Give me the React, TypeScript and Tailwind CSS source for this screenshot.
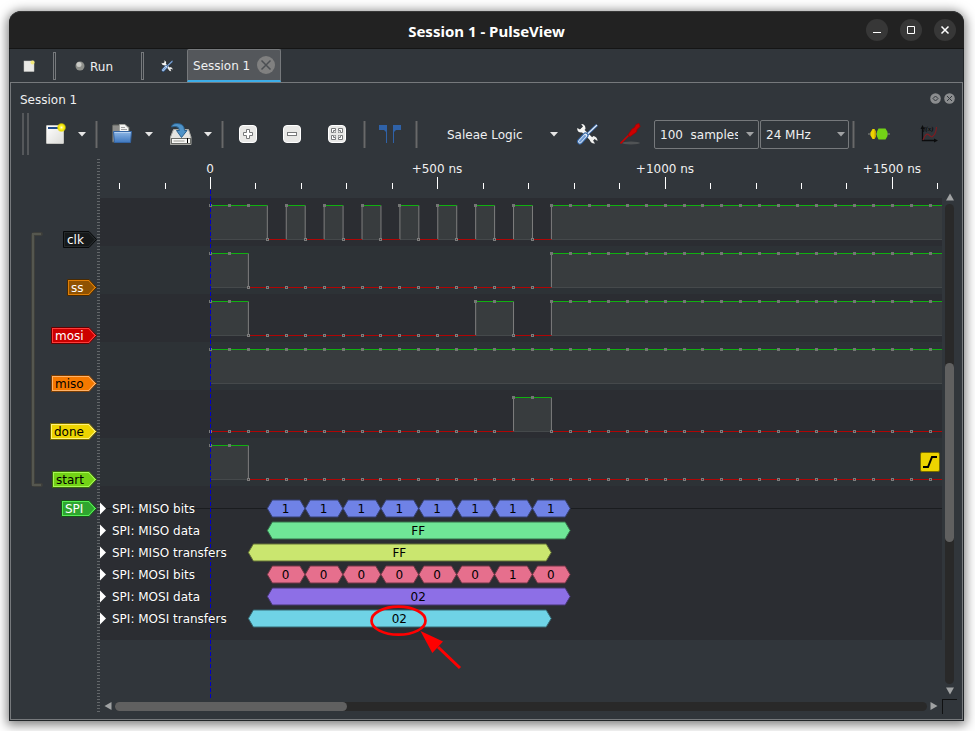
import React from "react";

const T0 = 110.5;
const SAMPLE = 18.94;
const TICK = 45.46;
const SAMPLE_COUNT = 110;
const TOP = 40;
const ROW = 48;

type Signal = { name: string; high: [number, number][] };

const END = SAMPLE_COUNT;

const signals: Signal[] = [
  {
    name: "clk",
    high: [[0, 3], [4, 5], [6, 7], [8, 9], [10, 11], [12, 13], [14, 15], [16, 17], [18, END]],
  },
  { name: "ss", high: [[0, 2], [18, END]] },
  { name: "mosi", high: [[0, 2], [14, 16], [18, END]] },
  { name: "miso", high: [[0, END]] },
  { name: "done", high: [[16, 18]] },
  { name: "start", high: [[0, 2]] },
];

type Flag = { name: string; x: number; y: number; fill: string; light: string; edge: string; text: string };

const flags: Flag[] = [
  { name: "clk", x: 52, y: 81, fill: "#16191a", light: "#24292b", edge: "#07090a", text: "#ffffff" },
  { name: "ss", x: 56, y: 129, fill: "#8f5202", light: "#e07f06", edge: "#4a2a01", text: "#ffffff" },
  { name: "mosi", x: 40, y: 177, fill: "#cc0000", light: "#ff3b3b", edge: "#660000", text: "#ffffff" },
  { name: "miso", x: 40, y: 225, fill: "#f57900", light: "#ffb268", edge: "#7a3c00", text: "#000000" },
  { name: "done", x: 39, y: 273, fill: "#edd400", light: "#fff27a", edge: "#766a00", text: "#000000" },
  { name: "start", x: 41, y: 321, fill: "#73d216", light: "#a6fa55", edge: "#39690b", text: "#000000" },
  { name: "SPI", x: 50, y: 350, fill: "#2fa52f", light: "#55f055", edge: "#175217", text: "#ffffff" },
];

type Annotation = { from: number; to: number; text: string };
type DecoderRow = { title: string; fill: string; edge: string; items: Annotation[] };

const bits = (s: string): Annotation[] =>
  s.split("").map((text, i) => ({ from: 3 + i * 2, to: 5 + i * 2, text }));

const decoderRows: DecoderRow[] = [
  { title: "SPI: MISO bits", fill: "#6f82e6", edge: "#374173", items: bits("11111111") },
  { title: "SPI: MISO data", fill: "#6fe697", edge: "#37734b", items: [{ from: 3, to: 19, text: "FF" }] },
  { title: "SPI: MISO transfers", fill: "#cae66f", edge: "#657337", items: [{ from: 2, to: 18, text: "FF" }] },
  { title: "SPI: MOSI bits", fill: "#e66f8d", edge: "#733746", items: bits("00000010") },
  { title: "SPI: MOSI data", fill: "#8d6fe6", edge: "#463773", items: [{ from: 3, to: 19, text: "02" }] },
  { title: "SPI: MOSI transfers", fill: "#6fd3e6", edge: "#376973", items: [{ from: 2, to: 18, text: "02" }] },
];

const sx = (n: number) => T0 + n * SAMPLE;

function Trace({ signal, index }: { signal: Signal; index: number }) {
  const top = TOP + index * ROW;
  const hi = top + 7.5;
  const lo = top + 41.5;
  const isHigh = (n: number) => signal.high.some(([a, b]) => n >= a && n < b);
  const lows: [number, number][] = [];
  let at = 0;
  signal.high.forEach(([a, b]) => {
    if (a > at) lows.push([at, a]);
    at = b;
  });
  if (at < END) lows.push([at, END]);
  return (
    <g>
      <rect x="0" y={top} width="100%" height={ROW} fill={index % 2 ? "#2d3236" : "#2b2d32"} />
      {signal.high.map(([a, b]) => (
        <g key={a}>
          <rect x={sx(a)} y={hi} width={sx(b) - sx(a)} height="34" fill="#383c3e" />
          <path d={`M${sx(a)} ${lo}H${sx(b)}`} stroke="#45494b" />
          {a > 0 && <path d={`M${sx(a)} ${hi}V${lo}`} stroke="#7e7e7e" />}
          <path d={`M${sx(b)} ${hi}V${lo}`} stroke="#7e7e7e" />
          <path d={`M${sx(a)} ${hi}H${sx(b)}`} stroke="#10b010" />
        </g>
      ))}
      {lows.map(([a, b]) => (
        <path key={a} d={`M${sx(a)} ${lo}H${sx(b)}`} stroke="#b00505" />
      ))}
      {Array.from({ length: SAMPLE_COUNT }, (_, n) => {
        const x = Math.round(sx(n) - 0.5) - 1;
        return isHigh(n) ? (
          <rect key={n} x={x} y={hi - 1.5} width="3" height="3" fill="#747674" />
        ) : (
          <rect key={n} x={x + 0.5} y={lo - 1} width="2" height="2" fill="#40393a" stroke="#7d7d7d" />
        );
      })}
    </g>
  );
}

const ticks = Array.from({ length: 19 }, (_, i) => i - 2);

function TraceView() {
  const cursor = Math.floor(T0) + 0.5;
  return (
    <svg className="block h-[540px] w-full overflow-hidden text-xs" role="img" aria-label="Signal traces">
      {ticks.map((n) => {
        const x = Math.floor(T0 + n * TICK) + 0.5;
        const major = n % 5 === 0;
        return (
          <g key={n}>
            <path d={major ? `M${x} 19V31` : `M${x} 25V31`} stroke="#ffffff" />
            {major && (
              <text x={x - 0.5} y="15" textAnchor="middle" fill="#f0f0f0">
                {n === 0 ? "0" : `+${n * 100} ns`}
              </text>
            )}
          </g>
        );
      })}
      {signals.map((s, i) => (
        <Trace key={s.name} signal={s} index={i} />
      ))}
      <rect x="0" y="328" width="100%" height="154" fill="#2b2d32" />
      <path d="M0 350.5H3000" stroke="#1a1c1f" />
      <path d={`M${cursor} 32V540`} stroke="#0000c8" strokeDasharray="4 2" />
      {decoderRows.map((row, i) => {
        const y = 350.5 + i * 22;
        return (
          <g key={row.title}>
            <path d={`M0 ${y - 6}L6 ${y}L0 ${y + 6}Z`} fill="#ffffff" />
            <text x="12" y={y + 4} fill="#ffffff" stroke="#1f2124" strokeWidth="1" paintOrder="stroke">
              {row.title}
            </text>
            {row.items.map((a) => {
              const l = sx(a.from);
              const r = sx(a.to) - 0.2;
              return (
                <g key={a.from}>
                  <path
                    d={`M${l} ${y}L${l + 5} ${y - 8.5}H${r - 5}L${r} ${y}L${r - 5} ${y + 8.5}H${l + 5}Z`}
                    fill={row.fill}
                    stroke={row.edge}
                  />
                  <text x={(l + r) / 2 - 0.5} y={y + 4} textAnchor="middle" fill="#000000">
                    {a.text}
                  </text>
                </g>
              );
            })}
          </g>
        );
      })}
      <ellipse cx="298.5" cy="462.7" rx="27" ry="14" fill="none" stroke="#ff0000" strokeWidth="2.7" />
      <path d="M360 510L338 489" stroke="#ff0000" strokeWidth="3" />
      <path d="M320.5 473L343 483.5L332.3 495Z" fill="#ff0000" />
    </svg>
  );
}

function ChannelLabels() {
  return (
    <svg className="block h-[540px] w-[86px] shrink-0 text-xs" role="img" aria-label="Channels">
      <path d="M30 76H23.5Q22 76 22 77.5V326Q22 327 23.5 327H30" fill="none" stroke="#3e3f3b" strokeWidth="4" strokeLinecap="round" />
      <path d="M30 76H22V327H30" fill="none" stroke="#55574f" strokeWidth="2" />
      {flags.map(({ name, x, y, fill, light, edge, text }) => (
        <g key={name}>
          <path d={`M${x + 0.5} ${y - 7.5}H78L85.5 ${y + 0.5}L78 ${y + 8.5}H${x + 0.5}Z`} fill={light} stroke={edge} />
          <path d={`M${x + 2} ${y - 6}H77.5L83.5 ${y + 0.5}L77.5 ${y + 7}H${x + 2}Z`} fill={fill} />
          <text x={x + 4} y={y + 5} fill={text}>
            {name}
          </text>
        </g>
      ))}
    </svg>
  );
}

function DownArrow({ color = "#e6e6e6" }: { color?: string }) {
  return (
    <svg width="8" height="5" viewBox="0 0 8 5" aria-hidden="true">
      <path d="M0 0H8L4 4.5Z" fill={color} />
    </svg>
  );
}

function Separator({ className }: { className: string }) {
  return <div className={`h-[27px] w-[3px] shrink-0 border-x border-[#4b4d4f] bg-[#68696a] ${className}`} />;
}

function ToolButton({ label, className = "w-7", children }: { label: string; className?: string; children: React.ReactNode }) {
  return (
    <button type="button" aria-label={label} className={`flex h-7 shrink-0 items-center justify-center ${className}`}>
      {children}
    </button>
  );
}

function NewIcon() {
  return (
    <svg width="22" height="22" viewBox="0 0 22 22">
      <defs>
        <linearGradient id="paper" x1="0" y1="0" x2="1" y2="1">
          <stop offset="0" stopColor="#ffffff" />
          <stop offset="1" stopColor="#dcdcd8" />
        </linearGradient>
        <radialGradient id="glow">
          <stop offset="0" stopColor="#fffde0" />
          <stop offset="0.35" stopColor="#fff32a" />
          <stop offset="0.7" stopColor="#e8dc00" />
          <stop offset="1" stopColor="#e8dc00" stopOpacity="0" />
        </radialGradient>
      </defs>
      <rect x="1.5" y="2.5" width="17" height="18" rx="0.5" fill="url(#paper)" stroke="#c4c4c0" />
      <rect x="3" y="4" width="14" height="2" fill="#204a87" />
      <circle cx="16.5" cy="4.5" r="4.8" fill="url(#glow)" />
    </svg>
  );
}

function FolderIcon() {
  return (
    <svg width="22" height="22" viewBox="0 0 22 22">
      <defs>
        <linearGradient id="folder" x1="0" y1="0" x2="0" y2="1">
          <stop offset="0" stopColor="#8fb8e6" />
          <stop offset="1" stopColor="#3f78bf" />
        </linearGradient>
      </defs>
      <path d="M1.5 19V3Q1.5 2 2.5 2H8L9.5 4H18V19Z" fill="#8d8d8a" stroke="#62645f" />
      <path d="M8.5 12V1.500H14L17.5 5V12Z" fill="#f4f4f2" stroke="#a5a7a2" />
      <path d="M10 4.500H14M10 6.500H16" stroke="#a0a0a0" />
      <path d="M2.5 8.5H20.5L19.5 19.5H3.5Z" fill="url(#folder)" stroke="#3465a4" />
      <path d="M3.5 9.5H19.5" stroke="#b4d0f0" />
    </svg>
  );
}

function SaveIcon() {
  return (
    <svg width="24" height="24" viewBox="0 0 24 24">
      <path d="M4.5 7.5H19.5L22 15V22.5H1.5V15Z" fill="#e4e4e1" stroke="#a8a8a4" />
      <rect x="2.5" y="16.5" width="19" height="5" fill="#f8f8f6" stroke="#6b6d69" />
      <rect x="4.5" y="18" width="11" height="2" fill="#c8c8c4" />
      <path d="M18.5 16V21" stroke="#000000" />
      <path d="M2.5 5Q3 1.500 8 1.500Q15.500 1.500 15.500 8.500H18L12.5 15.500L7.500 8.500H10.5Q10 4.500 6.500 4.500Q4 4.500 2.500 5Z" fill="#4f93c8" stroke="#2a608d" />
    </svg>
  );
}

function ZoomIcon({ kind }: { kind: "in" | "out" | "fit" }) {
  return (
    <svg width="20" height="20" viewBox="0 0 20 20">
      <rect x="1.5" y="1.5" width="17" height="17" rx="3.5" fill="#e8e8e6" stroke="#ffffff" />
      {kind === "in" && (
        <path d="M8.5 5.5H11.5V8.5H14.5V11.5H11.5V14.5H8.5V11.5H5.5V8.5H8.5Z" fill="#ffffff" stroke="#77797a" />
      )}
      {kind === "out" && <rect x="5.5" y="8.5" width="9" height="3" fill="#ffffff" stroke="#77797a" />}
      {kind === "fit" && (
        <g fill="#ffffff" stroke="#77797a">
          <path d="M4.500 8.500V4.500H8.500V6.500H6.500V8.500Z" />
          <path d="M11.500 4.500H15.500V8.500H13.500V6.500H11.500Z" />
          <path d="M4.500 11.500V15.500H8.500V13.500H6.500V11.500Z" />
          <path d="M11.500 15.500H15.500V11.500H13.500V13.500H11.500Z" />
          <path d="M8.500 7.500V8.500H7.500M11.500 7.500V8.500H12.500M8.500 12.500V11.500H7.500M11.500 12.500V11.500H12.500" fill="none" />
        </g>
      )}
    </svg>
  );
}

function CursorsIcon() {
  return (
    <svg width="22" height="18" viewBox="0 0 22 18">
      <path d="M0 0H8V18H7V7L5 5H0Z" fill="#2f62a8" />
      <path d="M22 0H14V18H15V7L17 5H22Z" fill="#2f62a8" />
    </svg>
  );
}

function ToolsIcon({ size }: { size: number }) {
  return (
    <svg width={size} height={size} viewBox="0 0 22 22">
      <path d="M5 6L17 17.500" stroke="#f6f6f4" strokeWidth="3.600" />
      <path d="M1.200 5Q1 9.500 5.500 9.500L9.500 6Q9.500 1 5.200 1L7 3.500L4 6.500Z" fill="#f6f6f4" />
      <path d="M13.500 16.500L17.500 13Q21.500 14 21.500 18L18.500 16L17 17.500L19 20.500Q15 21 13.500 16.500Z" fill="#f0f0ee" />
      <path d="M21 2L11 11.500" stroke="#3465a4" strokeWidth="3" />
      <path d="M21 2L11 11.500" stroke="#e8eef8" strokeWidth="1.200" />
      <path d="M9.500 12.500L4 18.500" stroke="#3465a4" strokeWidth="6" strokeLinecap="round" />
      <path d="M9.500 12.500L4 18.500" stroke="#dbe7f6" strokeWidth="3.800" strokeLinecap="round" />
      <path d="M9 13L4 18.500" stroke="#6f9bd4" strokeWidth="2" strokeLinecap="round" />
    </svg>
  );
}

function ProbeIcon() {
  return (
    <svg width="22" height="22" viewBox="0 0 22 22">
      <ellipse cx="11" cy="20" rx="9" ry="1.500" fill="#505355" />
      <path d="M0.500 20.500L10 11" stroke="#cc0000" strokeWidth="1.600" />
      <path d="M8 12L12 6L14.500 4.500L16 1.500L19 0.500L20 3.500L17 6.500L16.500 9L10 13.500Z" fill="#cc0000" stroke="#a40000" strokeWidth="0.800" />
    </svg>
  );
}

function DecoderIcon() {
  return (
    <svg width="22" height="14" viewBox="0 0 22 14">
      <path d="M0 7H22" stroke="#888a85" />
      <path d="M4.500 2H6.500L8 5V9L6.500 12H4.500L2.500 8.500V5.500Z" fill="#edd400" />
      <path d="M6.500 2L8 5V9L6.500 12Z" fill="#c4a000" />
      <path d="M10.500 1.500H17.500L19.500 5V9L17.500 12.500H10.500L8.800 9V5Z" fill="#73d216" />
    </svg>
  );
}

function MathIcon() {
  return (
    <svg width="18" height="18" viewBox="0 0 18 18">
      <path d="M2.500 3V15.500H15" fill="none" stroke="#0b0c0d" strokeWidth="1.300" />
      <path d="M2.500 0L4.500 4H0.500ZM18 15.500L14 13.500V17.500Z" fill="#0b0c0d" />
      <path d="M3 15Q6 7 9 10T13 11Q16 9 16.500 2" fill="none" stroke="#7d1d22" strokeWidth="1.200" />
      <text x="3" y="6" fontSize="7" fontStyle="italic" fontWeight="bold" fill="#0b0c0d" fontFamily="Liberation Serif, serif">
        f(x)
      </text>
    </svg>
  );
}

function WindowButton({ label, children }: { label: string; children: React.ReactNode }) {
  return (
    <button type="button" aria-label={label} className="flex size-[22px] items-center justify-center rounded-full bg-[#373737]">
      <svg width="10" height="10" viewBox="0 0 10 10" fill="none" stroke="#ffffff">
        {children}
      </svg>
    </button>
  );
}

function TitleBar() {
  return (
    <header className="grid h-[38px] shrink-0 grid-cols-[1fr_auto_1fr] items-center rounded-t-xl border-t border-b border-t-[#383838] border-b-[#151515] bg-[#222222] px-2">
      <span />
      <h1 className="pt-px font-['Noto_Sans',sans-serif] text-[15px] font-bold text-white">Session 1 - PulseView</h1>
      <div className="flex justify-end gap-3">
        <WindowButton label="Minimize">
          <path d="M1 7.500H9" />
        </WindowButton>
        <WindowButton label="Maximize">
          <path d="M1.500 1.500H8.500V8.500H1.500Z" />
        </WindowButton>
        <WindowButton label="Close">
          <path d="M1.500 1.500L8.500 8.500M8.500 1.500L1.500 8.500" strokeWidth="1.500" />
        </WindowButton>
      </div>
    </header>
  );
}

function TabSeparator({ className }: { className: string }) {
  return <div className={`h-7 w-[3px] shrink-0 border border-[#76797c] ${className}`} />;
}

function TabRow() {
  return (
    <nav className="flex h-[33px] shrink-0 items-center">
      <ToolButton label="New session" className="ml-[5px] w-7">
        <svg width="12" height="12" viewBox="0 0 12 12">
          <rect x="1" y="1" width="10" height="10.500" fill="#e9e9e6" stroke="#c8c8c4" strokeWidth="0.500" />
          <circle cx="9.500" cy="2.500" r="2" fill="#f2e87a" />
        </svg>
      </ToolButton>
      <TabSeparator className="ml-[10px]" />
      <button type="button" className="ml-[19px] flex items-center gap-[5px]">
        <svg width="10" height="10" viewBox="0 0 10 10">
          <circle cx="5" cy="5" r="4.500" fill="#8d8f8a" />
          <circle cx="4" cy="3.500" r="2.500" fill="#c9cac5" />
        </svg>
        <span className="pt-[2px]">Run</span>
      </button>
      <TabSeparator className="ml-7" />
      <ToolButton label="Settings" className="ml-[9px] w-7">
        <ToolsIcon size={12} />
      </ToolButton>
      <div className="ml-[6px] flex h-[33px] items-center gap-[7px] rounded-t-xs border border-b-2 border-[#76797c] border-b-[#3daee9] bg-[#54575b] pr-[5px] pl-[5px]">
        <button type="button" className="pt-px">Session 1</button>
        <button type="button" aria-label="Close tab">
          <svg className="block" width="18" height="18" viewBox="0 0 18 18">
            <circle cx="9" cy="9" r="9" fill="#808080" />
            <path d="M4.500 4.500L13.500 13.500M13.500 4.500L4.500 13.500" stroke="#4c4f53" strokeWidth="1.500" />
          </svg>
        </button>
      </div>
    </nav>
  );
}

function DockButton({ label, d }: { label: string; d: string }) {
  return (
    <button type="button" aria-label={label}>
      <svg className="block" width="11" height="11" viewBox="0 0 11 11">
        <circle cx="5.500" cy="5.500" r="5.300" fill="#8b8d8f" />
        <path d={d} fill="none" stroke="#31363b" />
      </svg>
    </button>
  );
}

function MainToolbar() {
  return (
    <div role="toolbar" className="flex h-[42px] shrink-0 items-center pl-[11px]">
      <div className="h-full w-[7px] shrink-0 border-x-2 border-[#55585b]" />
      <ToolButton label="New" className="ml-[13px] w-[27px]"><NewIcon /></ToolButton>
      <ToolButton label="New options" className="w-[25px]"><DownArrow /></ToolButton>
      <Separator className="ml-px" />
      <ToolButton label="Open" className="ml-[10px] w-7"><FolderIcon /></ToolButton>
      <ToolButton label="Open options" className="w-[25px]"><DownArrow /></ToolButton>
      <ToolButton label="Save" className="ml-[6px] w-7"><SaveIcon /></ToolButton>
      <ToolButton label="Save options" className="w-[25px]"><DownArrow /></ToolButton>
      <Separator className="ml-px" />
      <ToolButton label="Zoom in" className="ml-[10px] w-7"><ZoomIcon kind="in" /></ToolButton>
      <ToolButton label="Zoom out" className="ml-4 w-7"><ZoomIcon kind="out" /></ToolButton>
      <ToolButton label="Zoom to fit" className="ml-[17px] w-7"><ZoomIcon kind="fit" /></ToolButton>
      <Separator className="ml-3" />
      <ToolButton label="Show cursors" className="ml-[10px] w-7"><CursorsIcon /></ToolButton>
      <Separator className="ml-[11px]" />
      <button type="button" className="ml-[29px] flex w-[111px] shrink-0 items-center justify-between whitespace-nowrap">
        <span className="pt-[2px]">Saleae Logic</span>
        <DownArrow />
      </button>
      <ToolButton label="Configure device" className="ml-[15px] w-7"><ToolsIcon size={22} /></ToolButton>
      <ToolButton label="Channels" className="ml-4 w-7"><ProbeIcon /></ToolButton>
      <div className="ml-[9px] flex h-[29px] w-[105px] shrink-0 items-center justify-between rounded-xs border border-[#76797c] pr-1 pl-[5px]">
        <input aria-label="Sample count" defaultValue="100  samples" className="w-[78px] bg-transparent pt-[2px] outline-none" />
        <DownArrow color="#a0a2a4" />
      </div>
      <div className="relative ml-px h-[29px] w-[89px] shrink-0">
        <select aria-label="Sample rate" defaultValue="24" className="h-full w-full appearance-none rounded-xs border border-[#76797c] bg-transparent pt-[2px] pl-[5px]">
          <option value="24">24 MHz</option>
          <option value="12">12 MHz</option>
        </select>
        <span className="pointer-events-none absolute inset-y-0 right-1 flex items-center"><DownArrow color="#a0a2a4" /></span>
      </div>
      <Separator className="ml-[3px]" />
      <ToolButton label="Add decoder" className="ml-[10px] w-7"><DecoderIcon /></ToolButton>
      <ToolButton label="Add math signal" className="ml-[22px] w-7"><MathIcon /></ToolButton>
    </div>
  );
}

function ScrollArrow({ d, label }: { d: string; label: string }) {
  return (
    <button type="button" aria-label={label} className="shrink-0">
      <svg className="block" width="8" height="8" viewBox="0 0 8 8">
        <path d={d} fill="#a0a2a3" />
      </svg>
    </button>
  );
}

export default function App() {
  return (
    <div className="flex min-h-screen flex-col bg-white pt-[11px] pr-[11px] pb-[10px] pl-[9px] font-['DejaVu_Sans',sans-serif] text-xs text-[#eff0f1]">
      <div className="flex flex-1 flex-col rounded-t-xl bg-[#31363b] shadow-[0_2px_11px_2px_rgba(0,0,0,0.5)]">
        <TitleBar />
        <div className="flex flex-1 flex-col border-x border-b border-[#222629]">
          <TabRow />
          <main className="flex flex-1 flex-col border border-[#76797c]">
            <div className="flex h-[30px] shrink-0 items-center justify-between pr-[7px] pl-[9px]">
              <h2 className="pt-1">Session 1</h2>
              <div className="flex gap-[3px]">
                <DockButton label="Float" d="M5.500 3L8 5.500L5.500 8L3 5.500Z" />
                <DockButton label="Close" d="M3 3L8 8M8 3L3 8" />
              </div>
            </div>
            <MainToolbar />
            <div className="flex flex-1 pt-[3px] pr-[5px] pb-[5px]">
              <ChannelLabels />
              <div className="w-[3px] shrink-0 bg-[repeating-linear-gradient(to_bottom,#31363b_0_1px,#63676a_1px_2px,#31363b_2px_3px)]" />
              <div className="flex min-w-0 flex-1 flex-col">
                <div className="relative">
                  <TraceView />
                  <button type="button" aria-label="Rising edge trigger" className="absolute top-[294px] right-[2px]">
                    <svg className="block" width="20" height="20" viewBox="0 0 20 20">
                      <rect x="0.500" y="0.500" width="19" height="19" rx="1.500" fill="#edd400" stroke="#766a00" />
                      <path d="M3 15H8L12 5H17" fill="none" stroke="#000000" strokeWidth="2" />
                    </svg>
                  </button>
                </div>
                <div className="flex h-4 items-center gap-[3px] pr-1 pl-1">
                  <ScrollArrow label="Scroll left" d="M7.500 0V8L0.500 4Z" />
                  <div className="h-[9px] flex-1 rounded-full bg-[#292929]">
                    <div className="h-full w-2/7 rounded-full bg-[#606060]" />
                  </div>
                  <ScrollArrow label="Scroll right" d="M0.500 0V8L7.500 4Z" />
                </div>
              </div>
              <div className="flex w-[15px] shrink-0 flex-col items-center">
                <div className="flex flex-1 flex-col items-center gap-[3px] pt-[35px] pb-1">
                  <ScrollArrow label="Scroll up" d="M0 7.500H8L4 0.500Z" />
                  <div className="flex w-[9px] flex-1 flex-col rounded-full bg-[#292929]">
                    <div className="grow-[159]" />
                    <div className="grow-[179] rounded-full bg-[#606060]" />
                    <div className="grow-[142]" />
                  </div>
                  <ScrollArrow label="Scroll down" d="M0 0.500H8L4 7.500Z" />
                </div>
                <div className="size-[15px] border-t border-l border-[#101112]" />
              </div>
            </div>
          </main>
        </div>
      </div>
    </div>
  );
}
